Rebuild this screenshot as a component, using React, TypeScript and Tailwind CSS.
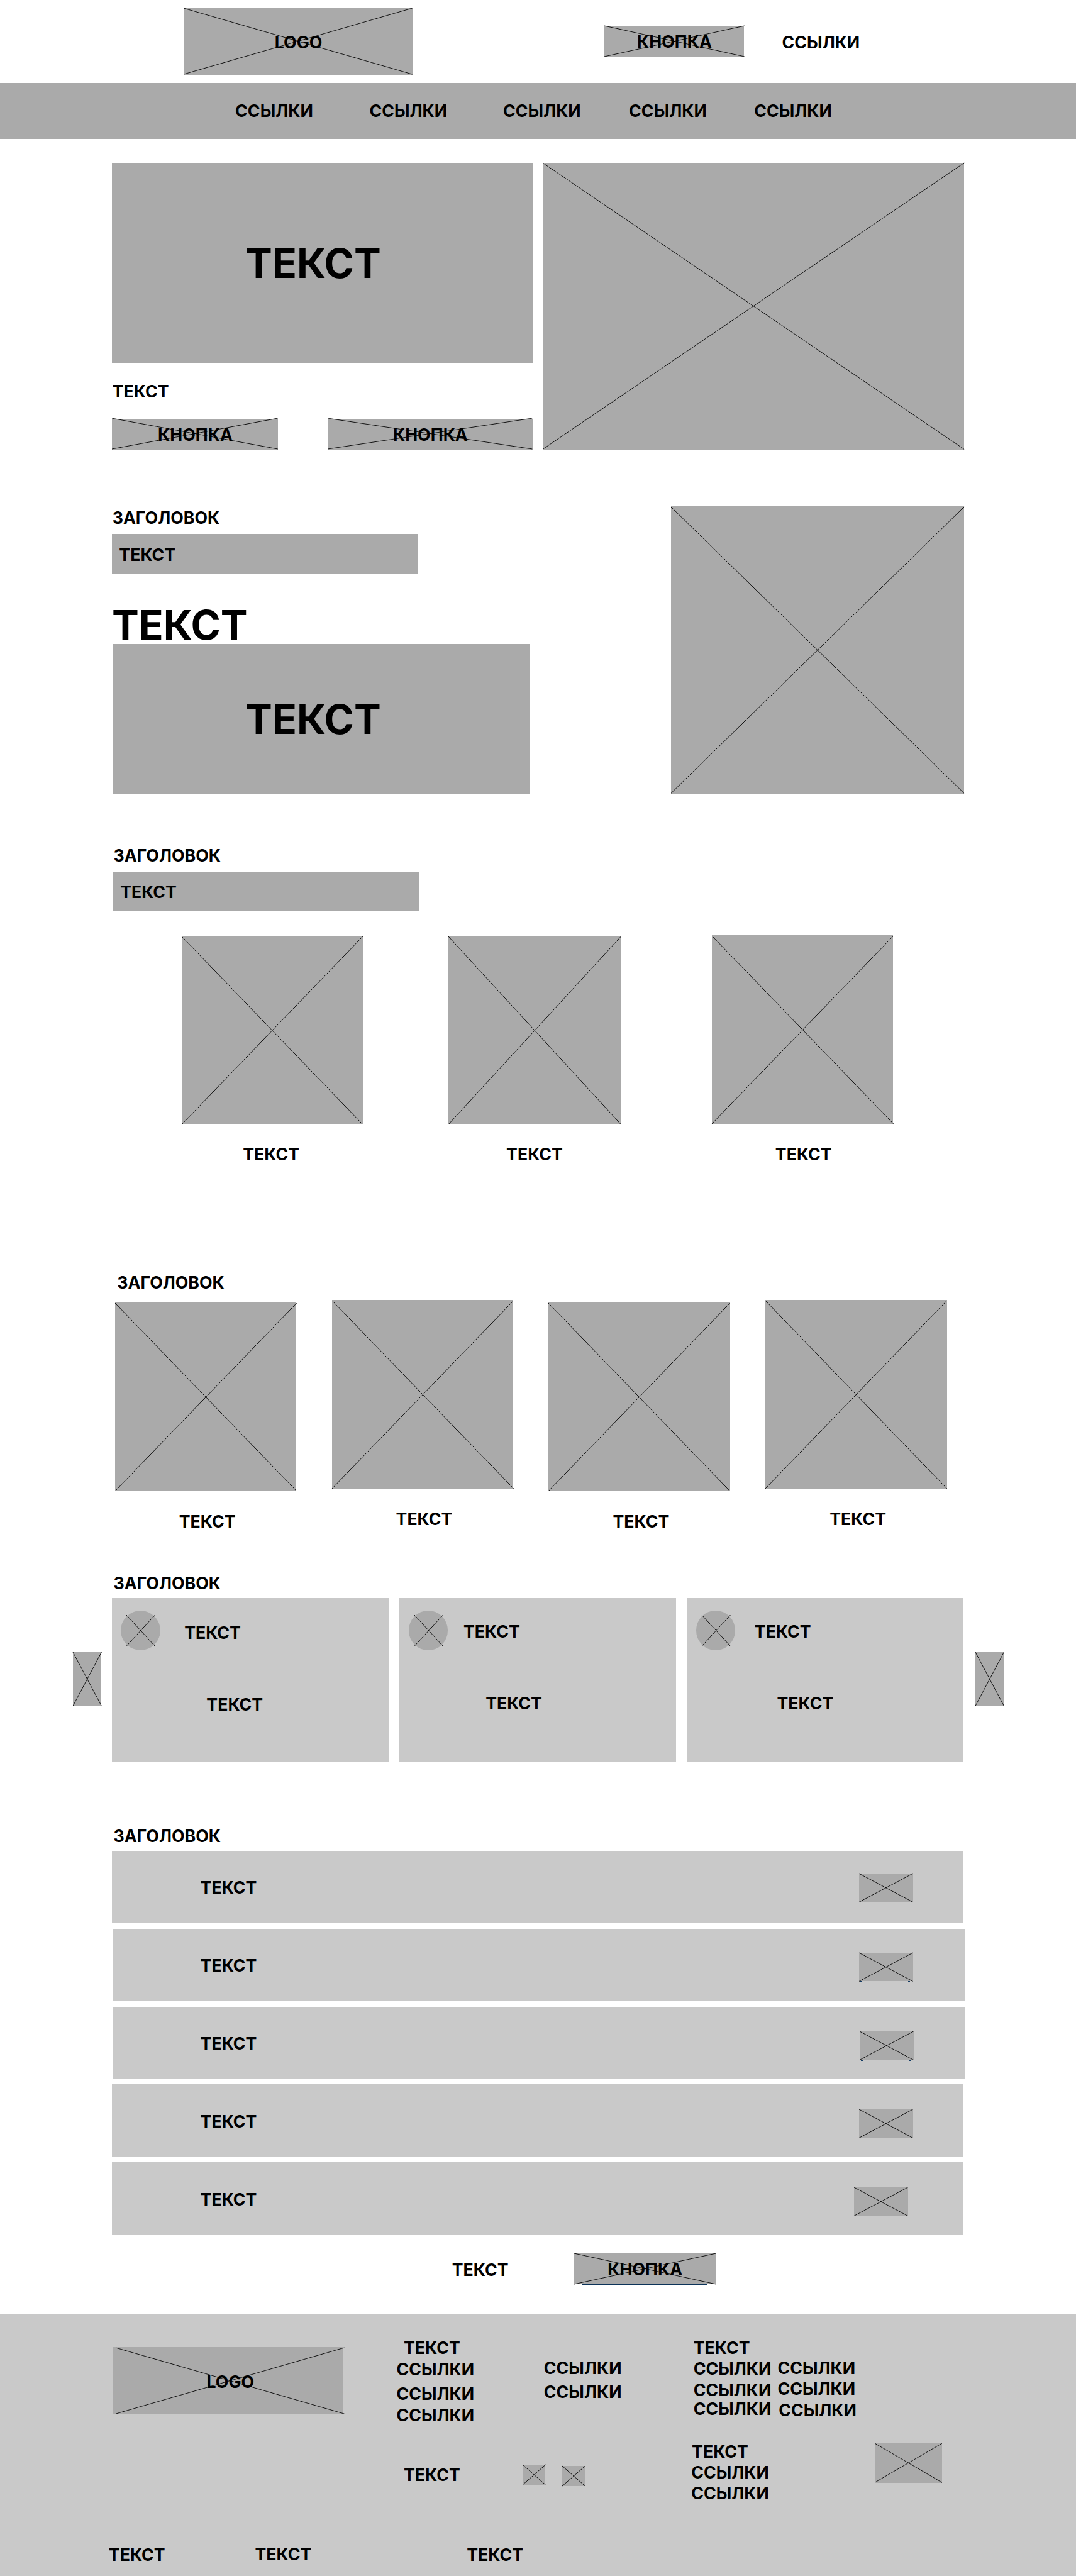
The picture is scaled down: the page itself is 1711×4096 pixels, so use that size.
import type { ReactNode } from "react";

const LINES_DEFAULT = "left-0 -top-[0.5px] h-full w-full";
const LINES_INSET = "left-0 top-px h-[calc(100%-1.5px)] w-full";

/** Crossed-out placeholder for a picture, a logo or a button. */
function Frame({
  className = "",
  lines = LINES_DEFAULT,
  children,
}: {
  className?: string;
  lines?: string;
  children?: ReactNode;
}) {
  return (
    <div className={`relative flex shrink-0 items-center justify-center bg-[#aaaaaa] ${className}`}>
      {children}
      <svg className={`absolute overflow-visible ${lines}`} stroke="#000" strokeWidth="1" fill="none">
        <line x1="0" y1="0" x2="100%" y2="100%" />
        <line x1="0" y1="100%" x2="100%" y2="0" />
      </svg>
    </div>
  );
}

function Label({ className = "", children }: { className?: string; children: ReactNode }) {
  return (
    <span
      className={`block translate-x-[0.5px] translate-y-[0.6px] whitespace-nowrap text-[30px] leading-[30px] font-bold ${className}`}
    >
      {children}
    </span>
  );
}

function Big({ className = "", children }: { className?: string; children: ReactNode }) {
  return (
    <span
      className={`block translate-x-[0.8px] translate-y-[0.8px] whitespace-nowrap text-[72px] leading-[60px] font-bold ${className}`}
    >
      {children}
    </span>
  );
}

function Header() {
  return (
    <header>
      <div className="flex h-[148px] items-start pt-[15px] pl-[328px]">
        <Frame className="h-[118px] w-[408px]">
          <Label>LOGO</Label>
        </Frame>
        <Frame className="mt-[31px] ml-[342px] h-[55px] w-[250px]">
          <Label>КНОПКА</Label>
        </Frame>
        <Label className="mt-[44px] ml-[67px]">ССЫЛКИ</Label>
      </div>
      <nav className="grid h-[100px] grid-cols-[239.5px_238.5px_224.5px_223.5px_auto] bg-[#aaaaaa] pt-[34px] pl-[419.3px]">
        {[0, 1, 2, 3, 4].map((i) => (
          <Label key={i}>ССЫЛКИ</Label>
        ))}
      </nav>
    </header>
  );
}

function Hero() {
  return (
    <section className="mt-[43px] flex gap-[16px] pl-[200px]">
      <div className="w-[752px]">
        <div className="flex h-[356px] items-center bg-[#aaaaaa] pl-[237px]">
          <Big>ТЕКСТ</Big>
        </div>
        <Label className="mt-[35px]">ТЕКСТ</Label>
        <div className="mt-[35px] flex gap-[89px]">
          <Frame className="h-[55px] w-[296px]">
            <Label>КНОПКА</Label>
          </Frame>
          <Frame className="h-[55px] w-[365px]">
            <Label>КНОПКА</Label>
          </Frame>
        </div>
      </div>
      <Frame className="h-[511px] w-[752px]" />
    </section>
  );
}

function About() {
  return (
    <section className="mt-[100px] flex items-start justify-between pr-[200px] pl-[200px]">
      <div className="pt-[6px]">
        <Label>ЗАГОЛОВОК</Label>
        <div className="mt-[15px] flex h-[71px] w-[545px] items-center bg-[#aaaaaa] pt-px pl-[12px]">
          <Label>ТЕКСТ</Label>
        </div>
        <Big className="mt-[60.5px] -ml-px">ТЕКСТ</Big>
        <div className="mt-[4.5px] ml-[2px] flex h-[267px] w-[744px] items-center bg-[#aaaaaa] pl-[235px]">
          <Big>ТЕКСТ</Big>
        </div>
      </div>
      <Frame className="h-[514px] w-[523px]" lines="left-0 top-[2px] h-[calc(100%-3px)] w-full" />
    </section>
  );
}

function Trio() {
  return (
    <section className="mt-[94px] pl-[202px]">
      <Label>ЗАГОЛОВОК</Label>
      <div className="mt-[15px] flex h-[71px] w-[545px] items-center bg-[#aaaaaa] pt-px pl-[12px]">
        <Label>ТЕКСТ</Label>
      </div>
      <div className="mt-[44px] ml-[122px] flex items-start">
        <figure className="w-[323px]">
          <Frame className="h-[337px] w-[323px]" lines={LINES_INSET} />
          <Label className="mt-[36px] ml-[109px]">ТЕКСТ</Label>
        </figure>
        <figure className="ml-[153px] w-[308px]">
          <Frame className="h-[337px] w-[308px]" lines={LINES_INSET} />
          <Label className="mt-[36px] ml-[103px]">ТЕКСТ</Label>
        </figure>
        <figure className="-mt-px ml-[162px] w-[324px]">
          <Frame className="h-[337px] w-[324px]" lines={LINES_INSET} />
          <Label className="mt-[37px] ml-[113px]">ТЕКСТ</Label>
        </figure>
      </div>
    </section>
  );
}

function Quartet() {
  return (
    <section className="mt-[199px] pl-[205px]">
      <Label className="ml-[3.5px]">ЗАГОЛОВОК</Label>
      <div className="mt-[18px] flex items-start gap-[63px]">
        {["mt-[4px]", "mt-0", "mt-[4px]", "mt-0"].map((offset, i) => (
          <figure key={i} className={`w-[324px] ${offset}`}>
            <Frame className="h-[337px] w-[324px]" lines={LINES_INSET} />
            <Label className="mt-[37.5px] ml-[114px]">ТЕКСТ</Label>
          </figure>
        ))}
      </div>
    </section>
  );
}

const reviews = [
  { name: "mt-[23px] ml-[42.5px]", body: "mt-[97px] ml-[168px] pt-[4px]" },
  { name: "mt-[21px] ml-[27.5px]", body: "mt-[97px] ml-[153px] pt-[2px]" },
  { name: "mt-[21px] ml-[34px]", body: "mt-[97px] ml-[160px] pt-[2px]" },
];

function Reviews() {
  return (
    <section className="mt-[80px] pl-[130px]">
      <Label className="ml-[72px]">ЗАГОЛОВОК</Label>
      <div className="mt-[13px] flex items-start">
        <Frame className="mt-[96px] h-[96px] w-[51px]" lines="left-0 top-0 h-full w-full" />
        <div className="ml-[19px] flex gap-[20px]">
          {reviews.map((r, i) => (
            <article key={i} className="h-[293px] w-[493px] bg-[#c9c9c9] pt-[23px]">
              <div className="flex h-[50px] items-start pl-[16px]">
                <Frame
                  className="size-[70px] rounded-full"
                  lines="left-[10px] top-[7px] h-[55.5px] w-[51px]"
                />
                <Label className={r.name}>ТЕКСТ</Label>
              </div>
              <Label className={r.body}>ТЕКСТ</Label>
            </article>
          ))}
        </div>
        <Frame className="mt-[96px] ml-[21px] h-[96px] w-[51px]" lines="left-0 top-0 h-full w-full">
          <i className="absolute top-full left-[2px] h-[1.5px] w-[3px] bg-[#123a63]" />
        </Frame>
      </div>
    </section>
  );
}

const questions = [
  { row: "ml-0 pl-[157px]", icon: "mt-[40px] mr-[90px]" },
  { row: "ml-[2px] pl-[155px]", icon: "mt-[43px] mr-[92px]" },
  { row: "ml-[2px] pl-[155px]", icon: "mt-[44px] mr-[91px]" },
  { row: "ml-0 pl-[157px]", icon: "mt-[44px] mr-[90px]" },
  { row: "ml-0 pl-[157px]", icon: "mt-[44px] mr-[99px]" },
];

function Questions() {
  return (
    <section className="mt-[115px] pl-[200px]">
      <Label className="ml-[2px]">ЗАГОЛОВОК</Label>
      <div className="mt-[13px] flex flex-col gap-[10px]">
        {questions.map((q, i) => (
          <div key={i} className={`flex h-[129px] w-[1519px] items-start justify-between bg-[#c9c9c9] ${q.row}`}>
            <Label className="mt-[50px]">ТЕКСТ</Label>
            <Frame className={`h-[51px] w-[96px] ${q.icon}`} lines="left-0 top-0 h-full w-full">
              <i className="absolute top-full left-[2px] h-[1.5px] w-[4px] bg-[#123a63]" />
              <i className="absolute top-full right-[5px] h-[1.5px] w-[4px] bg-[#123a63]" />
            </Frame>
          </div>
        ))}
      </div>
      <div className="mt-[33px] ml-[606px] flex items-start">
        <Label className="mt-[14px] w-[218px]">ТЕКСТ</Label>
        <Frame className="h-[55px] w-[253px]" lines="left-0 top-[0.5px] h-full w-full">
          <Label>КНОПКА</Label>
          <i className="absolute top-full left-[15px] h-px w-[223px] bg-[#0c3358]" />
        </Frame>
      </div>
    </section>
  );
}

function Footer() {
  return (
    <footer className="mt-[54px] h-[468px] bg-[#c9c9c9] pt-[44px]">
      <div className="flex h-[361px] items-start pl-[202px]">
        <Frame className="mt-[15px] h-[120px] w-[411px]" lines="left-[5px] top-[1px] h-[118px] w-[408px]">
          <Label className="ml-[6px] pt-[2px]">LOGO</Label>
        </Frame>

        <div className="ml-[94px] w-[225px]">
          <Label className="ml-[13px]">ТЕКСТ</Label>
          <Label className="mt-[8.5px]">ССЫЛКИ</Label>
          <Label className="mt-[13.5px]">ССЫЛКИ</Label>
          <Label className="mt-[8px]">ССЫЛКИ</Label>
          <Label className="mt-[77px] ml-[13px]">ТЕКСТ</Label>
        </div>

        <div className="w-[305px] pt-[35.5px]">
          <Label className="ml-[38px]">ССЫЛКИ</Label>
          <Label className="mt-[13px] ml-[38px]">ССЫЛКИ</Label>
          <div className="mt-[115.5px] flex items-start gap-[30px]">
            <Frame className="h-[36px] w-[41px]" lines="left-0 top-0 h-full w-full" />
            <Frame className="mt-[3px] h-[36px] w-[41px]" lines="left-0 top-0 h-full w-full" />
          </div>
        </div>

        <div>
          <div className="flex items-start">
            <div className="w-[150px]">
              <Label>ТЕКСТ</Label>
              <Label className="mt-[7.5px]">ССЫЛКИ</Label>
              <Label className="mt-[8px]">ССЫЛКИ</Label>
              <Label className="mt-[3px]">ССЫЛКИ</Label>
            </div>
            <div className="pt-[35.5px]">
              <Label>ССЫЛКИ</Label>
              <Label className="mt-[8px]">ССЫЛКИ</Label>
              <Label className="mt-[8px] ml-[2px]">ССЫЛКИ</Label>
            </div>
          </div>
          <div className="mt-[44px] -ml-[4px] flex items-start">
            <div className="w-[328px]">
              <Label className="ml-px">ТЕКСТ</Label>
              <Label className="mt-[7px]">ССЫЛКИ</Label>
              <Label className="mt-[7px]">ССЫЛКИ</Label>
            </div>
            <Frame className="mt-px h-[70px] w-[120px]" lines="left-0 top-0 h-full w-full" />
          </div>
        </div>
      </div>
      <div className="grid grid-cols-[261px_378px_auto] pt-[8px] pl-[193.5px]">
        <Label>ТЕКСТ</Label>
        <Label className="-mt-px">ТЕКСТ</Label>
        <Label>ТЕКСТ</Label>
      </div>
    </footer>
  );
}

export default function App() {
  return (
    <div className="w-[1920px] overflow-hidden bg-white font-['Inter',sans-serif] text-black [zoom:0.8911458]">
      <Header />
      <main>
        <Hero />
        <About />
        <Trio />
        <Quartet />
        <Reviews />
        <Questions />
      </main>
      <Footer />
    </div>
  );
}
